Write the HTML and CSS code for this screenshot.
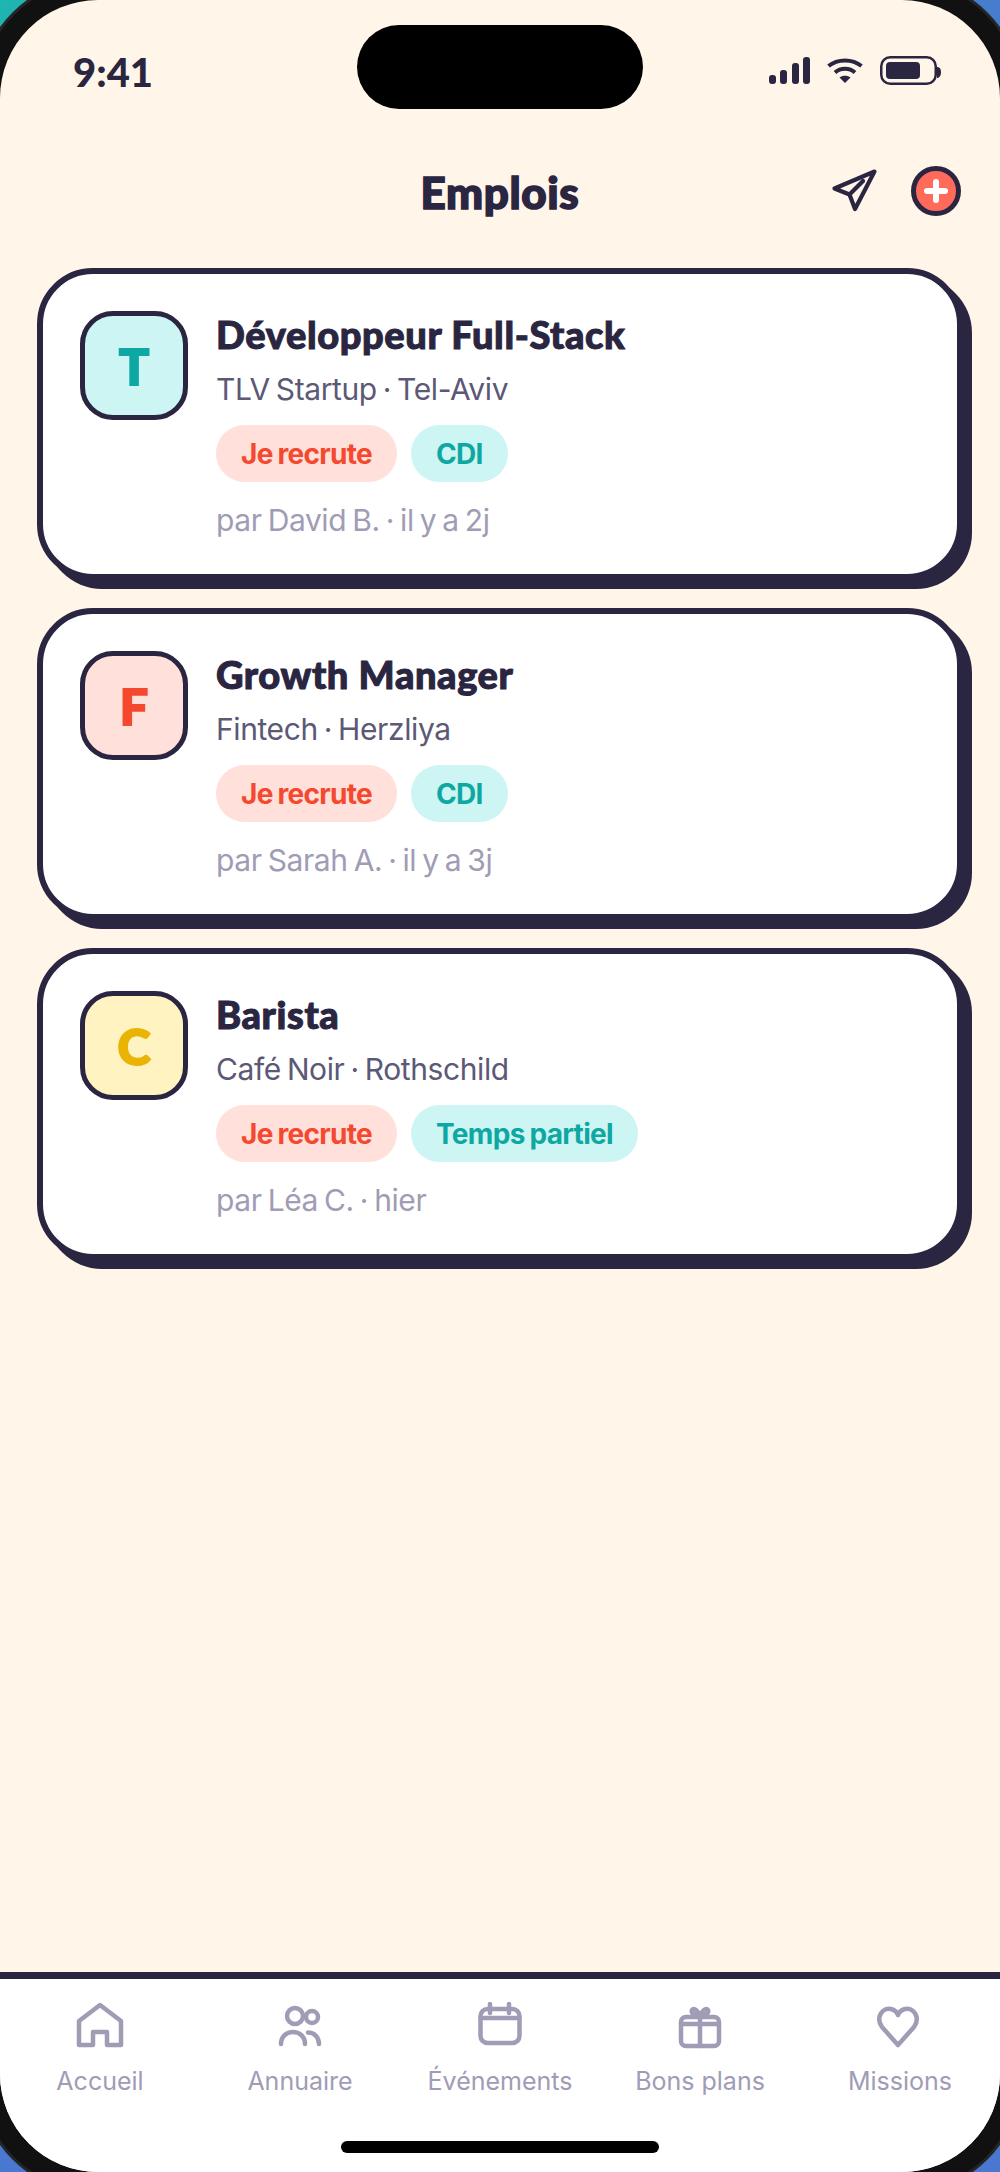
FILE: index.html
```html
<!DOCTYPE html>
<html lang="fr">

<head>
  <meta charset="UTF-8">
  <meta name="viewport" content="width=device-width, initial-scale=1.0">
  <title>Emplois</title>
  <link rel="stylesheet" href="styles.css">
</head>

<body>
  <div class="screen">
    <!-- barre de statut -->
    <div class="status-bar">
      <span class="time">9:41</span>
      <div class="island"></div>
      <div class="status-icons">
        <svg width="41" height="27" viewBox="0 0 41 27">
          <rect x="0" y="18" width="7" height="9" rx="3" fill="#2a2540" />
          <rect x="11" y="13" width="7" height="14" rx="3" fill="#2a2540" />
          <rect x="23" y="6" width="7" height="21" rx="3" fill="#2a2540" />
          <rect x="34" y="0" width="7" height="27" rx="3" fill="#2a2540" />
        </svg>
        <svg width="36" height="25" viewBox="0 0 36 25">
          <path d="M1.500 8C10.500 0.500 25.500 0.500 34.500 8" fill="none" stroke="#2a2540" stroke-width="4" />
          <path d="M8 14.500C13.500 9.500 22.500 9.500 28 14.500" fill="none" stroke="#2a2540" stroke-width="4" />
          <path d="M12.500 19.500C15.500 17 20.500 17 23.500 19.500L18 25Z" fill="#2a2540" />
        </svg>
        <svg width="61" height="29" viewBox="0 0 61 29">
          <rect x="1.250" y="1.250" width="54.500" height="26.500" rx="9" fill="none" stroke="#2a2540" stroke-width="2.500" />
          <rect x="6" y="6" width="34" height="17" rx="4" fill="#2a2540" />
          <path d="M57 11C59.500 11 61 12.500 61 16C61 19.500 59.500 22 57 22Z" fill="#2a2540" />
        </svg>
      </div>
    </div>

    <!-- en-tête -->
    <header class="top-bar">
      <h1>Emplois</h1>
      <div class="top-actions">
        <svg width="48" height="46" viewBox="0 0 48 46">
          <path d="M44.500 3.500L4.500 20.500L19.500 26.500L25 41Z" fill="none" stroke="#2a2540" stroke-width="4.200" stroke-linejoin="round" />
          <path d="M19.500 26.500L33 13" fill="none" stroke="#2a2540" stroke-width="4.200" stroke-linecap="round" />
        </svg>
        <div class="add-button"></div>
      </div>
    </header>

    <!-- liste des offres -->
    <main class="job-list">
      <article class="job-card">
        <div class="job-logo logo-teal">T</div>
        <div class="job-info">
          <h2>Développeur Full-Stack</h2>
          <p class="job-company">TLV Startup · Tel-Aviv</p>
          <div class="job-tags">
            <span class="tag tag-red">Je recrute</span>
            <span class="tag tag-teal">CDI</span>
          </div>
          <p class="job-author">par David B. · il y a 2j</p>
        </div>
      </article>

      <article class="job-card">
        <div class="job-logo logo-red">F</div>
        <div class="job-info">
          <h2>Growth Manager</h2>
          <p class="job-company">Fintech · Herzliya</p>
          <div class="job-tags">
            <span class="tag tag-red">Je recrute</span>
            <span class="tag tag-teal">CDI</span>
          </div>
          <p class="job-author">par Sarah A. · il y a 3j</p>
        </div>
      </article>

      <article class="job-card">
        <div class="job-logo logo-yellow">C</div>
        <div class="job-info">
          <h2>Barista</h2>
          <p class="job-company">Café Noir · Rothschild</p>
          <div class="job-tags">
            <span class="tag tag-red">Je recrute</span>
            <span class="tag tag-teal">Temps partiel</span>
          </div>
          <p class="job-author">par Léa C. · hier</p>
        </div>
      </article>
    </main>

    <!-- navigation du bas -->
    <nav class="tab-bar">
      <div class="tab">
        <svg width="48" height="48" viewBox="0 0 48 48">
          <path d="M24 3L3 19V43H17V30H31V43H45V19Z" />
        </svg>
        <span>Accueil</span>
      </div>
      <div class="tab">
        <svg width="48" height="48" viewBox="0 0 48 48">
          <circle cx="19" cy="14" r="8" />
          <circle cx="36" cy="15" r="6" />
          <path d="M5 42C5 26 29 26 29 42" />
          <path d="M32 30.500C38 30.500 43 35 43 42" />
        </svg>
        <span>Annuaire</span>
      </div>
      <div class="tab">
        <svg width="48" height="48" viewBox="0 0 48 48">
          <rect x="4.500" y="7" width="39" height="34" rx="7" />
          <path d="M4.500 16H43.500M14 2V11M33 2V11" />
        </svg>
        <span>Événements</span>
      </div>
      <div class="tab">
        <svg width="48" height="48" viewBox="0 0 48 48">
          <rect x="5" y="15" width="38" height="29" rx="5" />
          <path d="M5 22H43M24 15V44" />
          <path d="M24 14C17 14 15 10 16 8C18 5 22 9 24 14C26 9 30 5 32 8C33 10 31 14 24 14Z" />
        </svg>
        <span>Bons plans</span>
      </div>
      <div class="tab">
        <svg width="48" height="48" viewBox="0 0 48 48">
          <path d="M22 43L6 25C-1 15 7 5 15 7C19 8 21 10 22 13C23 10 25 8 29 7C37 5 45 15 38 25Z" />
        </svg>
        <span>Missions</span>
      </div>
      <div class="home-indicator"></div>
    </nav>
  </div>
</body>

</html>
```

FILE: styles.css
```css
/* fond derrière le téléphone */
html,
body {
  height: 100%;
}

body {
  margin: 0;
  background: linear-gradient(135deg, #1fb5b0 0%, #4a78d0 35%, #4a78d0 100%);
  font-family: "Inter", "Noto Sans", sans-serif;
  color: #2a2540;
  overflow: hidden;
}

.screen {
  position: relative;
  height: 2172px;
  display: flex;
  flex-direction: column;
  background: #fff5e9;
  border-radius: 98px;
  box-shadow: 0 0 0 20px #111, 0 0 0 23px #252525;
  overflow: hidden;
}

/* barre de statut */
.status-bar {
  height: 149px;
  flex: none;
  display: flex;
  align-items: flex-start;
  justify-content: space-between;
  padding: 0 59px 0 73px;
  box-sizing: border-box;
}

.time {
  font-family: "Lato", sans-serif;
  font-weight: 900;
  font-size: 40px;
  line-height: 44px;
  margin-top: 50px;
}

.island {
  position: absolute;
  top: 25px;
  left: 357px;
  width: 286px;
  height: 84px;
  border-radius: 42px;
  background: #000;
}

.status-icons {
  display: flex;
  align-items: center;
  gap: 17px;
  margin-top: 56px;
}

/* en-tête */
.top-bar {
  flex: none;
  height: 85px;
  position: relative;
  display: flex;
  align-items: center;
  justify-content: center;
}

.top-bar h1 {
  margin: 0;
  font-family: "Lato", sans-serif;
  font-weight: 900;
  font-size: 44px;
  letter-spacing: 0.6px;
  -webkit-text-stroke: 1.5px #2a2540;
}

.top-actions {
  position: absolute;
  right: 39px;
  top: 17px;
  display: flex;
  align-items: center;
  gap: 33px;
}

.add-button {
  position: relative;
  width: 50px;
  height: 50px;
  box-sizing: border-box;
  border: 5px solid #2a2540;
  border-radius: 50%;
  background: #ff6b5b;
}

.add-button::before,
.add-button::after {
  content: "";
  position: absolute;
  background: #fff;
  border-radius: 3px;
}

.add-button::before {
  left: 8px;
  right: 8px;
  top: 17px;
  height: 6px;
}

.add-button::after {
  top: 8px;
  bottom: 8px;
  left: 17px;
  width: 6px;
}

/* cartes */
.job-list {
  flex: 1;
  display: flex;
  flex-direction: column;
  gap: 28px;
  padding: 0 37px;
  margin-top: 34px;
}

.job-card {
  display: flex;
  gap: 28px;
  height: 312px;
  box-sizing: border-box;
  padding: 37px 37px 0 37px;
  background: #fff;
  border: 6px solid #2a2540;
  border-radius: 56px;
  box-shadow: 9px 9px 0 #2a2540;
}

.job-logo {
  flex: none;
  width: 108px;
  height: 109px;
  box-sizing: border-box;
  display: flex;
  align-items: center;
  justify-content: center;
  border: 5px solid #2a2540;
  border-radius: 33px;
  font-family: "Lato", sans-serif;
  font-weight: 900;
  font-size: 50px;
  -webkit-text-stroke: 2px currentColor;
}

.logo-teal {
  background: #cdf5f3;
  color: #0ea8a3;
}

.logo-red {
  background: #ffe0da;
  color: #f4492e;
}

.logo-yellow {
  background: #fff3c2;
  color: #e9b404;
}

.job-info h2 {
  margin: 0;
  font-family: "Lato", sans-serif;
  font-weight: 900;
  font-size: 38px;
  line-height: 46px;
  letter-spacing: 0.6px;
  -webkit-text-stroke: 1px #2a2540;
}

.job-company {
  margin: 10px 0 0;
  font-size: 30px;
  line-height: 44px;
  color: #5c5875;
  letter-spacing: -0.4px;
  word-spacing: -2px;
}

.job-tags {
  display: flex;
  gap: 14px;
  margin-top: 14px;
}

.tag {
  height: 57px;
  line-height: 58px;
  padding: 0 25px;
  border-radius: 29px;
  font-size: 28px;
  font-weight: 700;
  letter-spacing: -0.7px;
  word-spacing: -1px;
}

.tag-red {
  background: #ffe0da;
  color: #f4492e;
}

.tag-teal {
  background: #cdf5f3;
  color: #0ea8a3;
}

.job-author {
  margin: 16px 0 0;
  font-size: 30px;
  line-height: 44px;
  color: #a09cb5;
  letter-spacing: -0.4px;
  word-spacing: -2px;
}

/* navigation */
.tab-bar {
  position: relative;
  flex: none;
  height: 200px;
  box-sizing: border-box;
  display: flex;
  justify-content: space-between;
  padding: 23px 0 0;
  background: #fff;
  border-top: 7px solid #2a2540;
}

.tab {
  width: 200px;
  display: flex;
  flex-direction: column;
  align-items: center;
  gap: 14px;
  font-size: 25px;
  line-height: 34px;
  color: #a09cb5;
}

.tab svg {
  fill: none;
  stroke: #a09cb5;
  stroke-width: 4.500;
  stroke-linecap: round;
  stroke-linejoin: round;
}

.home-indicator {
  position: absolute;
  left: 341px;
  bottom: 19px;
  width: 318px;
  height: 12px;
  border-radius: 6px;
  background: #000;
}
```
